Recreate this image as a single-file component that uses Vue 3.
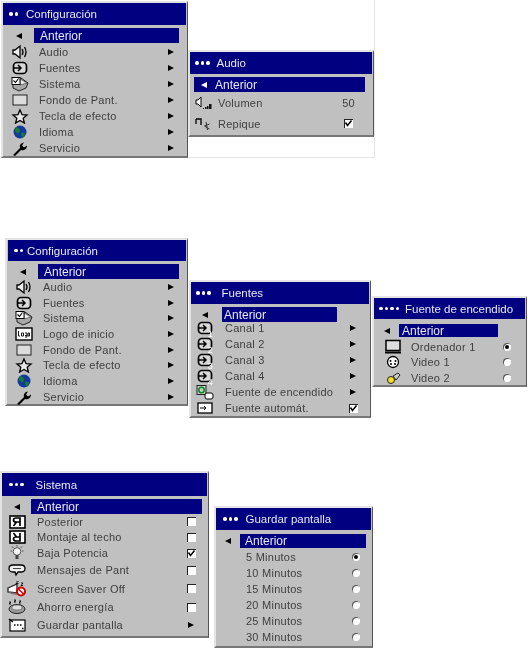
<script setup>
const sourceIcon = '<rect x="3.500" y="2.500" width="13" height="11" rx="3.500" fill="#d8d8d8" stroke="#000" stroke-width="1.700"/><path d="M3 8h8M8 5l3 3-3 3" fill="none" stroke="#000" stroke-width="1.500"/>'
const icons = {
  speaker: '<path d="M3 6h2l5-4v12l-5-4H3z" fill="#eee" stroke="#000" stroke-width="1.300"/><path d="M12 5q2 3 0 6M14.500 3q3 5 0 10" fill="none" stroke="#000" stroke-width="1.300"/>',
  source: sourceIcon,
  system: '<path d="M3 5l8-3 7 5-2 5-7 3-6-3z" fill="#a8a8a8" stroke="#222"/><path d="M10 3l7 4-7 2z" fill="#eee" stroke="#333" stroke-width=".6"/><rect x="2" y="1.500" width="8" height="7" fill="#fff" stroke="#000"/><path d="M3.500 4.500l2 2 3-4" fill="none" stroke="#000" stroke-width="1.100"/>',
  logo: '<rect x="2" y="2" width="16" height="12" fill="#fff" stroke="#000" stroke-width="1.400"/><path d="M4.500 5v5h1.500M7.500 7h2v3h-2zM11 7h2v4h-2M11 9.500h2M14 7h1.500v3H14z" fill="none" stroke="#000" stroke-width=".9"/>',
  wall: '<rect x="3" y="3" width="14" height="10" fill="#dcdcdc" stroke="#222"/>',
  star: '<path d="M10 2l2 4.600 5 .4-3.800 3.200 1.200 4.800-4.400-2.600L5.600 15l1.200-4.800L3 7l5-.4z" fill="#e8e8e8" stroke="#000" stroke-width="1.300"/>',
  globe: '<circle cx="10" cy="8" r="6.500" fill="#123a9c"/><path d="M6 3q4 1 4 4-1 3-3 2T5 6zM11 9q4-1 4 1l-2 4q-2-1-2-5z" fill="#1b7a30"/>',
  wrench: '<path d="M3 15l7-7q-1-3 2-5l2-.5-2 3 2 2 3-2q0 3-3 4.500-2 .5-3 0l-6 6z" fill="#000"/>',
  power: '<rect x="2" y="1.500" width="9" height="9" fill="#ccc" stroke="#222"/><circle cx="6.500" cy="6" r="2.700" fill="none" stroke="#0a8a20" stroke-width="1.600"/><rect x="10" y="9" width="8" height="6" rx="2" fill="#fff" stroke="#000"/>',
  auto: '<rect x="3" y="3" width="14" height="10" fill="#fff" stroke="#000" stroke-width="1.300"/><path d="M5 8h6M9 6l2 2-2 2" fill="none" stroke="#000"/>',
  monitor: '<rect x="3" y="1.500" width="14" height="10" fill="#ddd" stroke="#000" stroke-width="1.500"/><rect x="2" y="12.500" width="16" height="2" fill="#000"/>',
  svideo: '<circle cx="10" cy="8" r="5.500" fill="#fff" stroke="#000" stroke-width="1.300"/><circle cx="7.500" cy="7" r="1"/><circle cx="12.500" cy="7" r="1"/><circle cx="8" cy="10" r="1"/><circle cx="12" cy="10" r="1"/>',
  video: '<circle cx="8" cy="10" r="3.500" fill="#f0e020" stroke="#222"/><path d="M10 6l5-3 2 2-4 5z" fill="#ccc" stroke="#222"/>',
  rear: '<rect x="3" y="2" width="15" height="12" fill="#fff" stroke="#000" stroke-width="1.600"/><path d="M13 12V4H9q-2.500 0-2.500 2T9 8h4M9.500 8L6.500 12" fill="none" stroke="#000" stroke-width="1.700"/>',
  ceiling: '<rect x="3" y="2" width="15" height="12" fill="#fff" stroke="#000" stroke-width="1.600"/><path d="M13 4v8H9q-2.500 0-2.500-2T9 8h4M9.500 8L6.500 4" fill="none" stroke="#000" stroke-width="1.700"/>',
  bulb: '<circle cx="10" cy="6.500" r="3.800" fill="#f4f4f4" stroke="#555"/><rect x="8.500" y="10" width="3" height="4" fill="#444"/><path d="M10 0v1.500M3.500 6H5M15 6h1.500M5 1.500l1.500 1.500M15 1.500L13.500 3" stroke="#555"/>',
  message: '<path d="M6 3h8q4 0 4 3.500T14 10h-3l-2 3-1-3H6q-4 0-4-3.500T6 3z" fill="#eee" stroke="#000" stroke-width="1.300"/><path d="M6 6.500h8" stroke="#444"/>',
  saverOff: '<path d="M1 7l9-4v9l-9-1z" fill="#fff" stroke="#222" stroke-width="1.300"/><path d="M2 11l8 1 1 2-7-1z" fill="#777"/><circle cx="14" cy="10.500" r="4" fill="#fff" stroke="#d00000" stroke-width="2"/><path d="M11.500 8l5 5" stroke="#d00000" stroke-width="1.600"/><path d="M9 0h2.500L9 2.500h2.500M14 2h2l-2 2.500h2" fill="none" stroke="#000" stroke-width=".8"/>',
  eco: '<ellipse cx="10" cy="10" rx="8" ry="4.500" fill="#999" stroke="#222"/><ellipse cx="10" cy="8.500" rx="5" ry="2.500" fill="#ddd" stroke="#555" stroke-width=".6"/><path d="M2 3h2L2 5h2M7 1h2L7 3h2M12 2h2l-2 2h2" fill="none" stroke="#000" stroke-width=".9"/>',
  saver: '<rect x="3" y="3" width="15" height="11" fill="#fff" stroke="#000" stroke-width="1.200"/><path d="M2 2l4 3M7 8h1.500M10 8h1.500M13 8h1.500M15 11.500h1.500" stroke="#000" stroke-width="1.500"/>',
  volume: '<path d="M2 5h2l3-3v10l-3-3H2z" fill="#fff" stroke="#000"/><path d="M9 13h1v1H9zM11 12h1.500v2H11zM13 11h1.500v3H13zM15 9h2.500v5H15z" fill="#111"/>',
  music: '<path d="M2 3h5v6M2 3v5" fill="none" stroke="#000" stroke-width="1.300"/><path d="M12 6l1.500 8M15.500 8l-5 2 5 3" fill="none" stroke="#333"/>',
}

const ARROW = { trail: 'arrow' }
const windows = [
  { id: 'config1', dots: 2, title: 'Configuración', rows: [
    { icon: 'speaker', label: 'Audio', ...ARROW }, { icon: 'source', label: 'Fuentes', ...ARROW },
    { icon: 'system', label: 'Sistema', ...ARROW }, { icon: 'wall', label: 'Fondo de Pant.', ...ARROW },
    { icon: 'star', label: 'Tecla de efecto', ...ARROW }, { icon: 'globe', label: 'Idioma', ...ARROW },
    { icon: 'wrench', label: 'Servicio', ...ARROW } ] },
  { id: 'audio', dots: 3, title: 'Audio', arrowInside: true, rows: [
    { icon: 'volume', label: 'Volumen', value: '50' },
    { icon: 'music', label: 'Repique', trail: 'checked' } ] },
  { id: 'config2', dots: 2, title: 'Configuración', rows: [
    { icon: 'speaker', label: 'Audio', ...ARROW }, { icon: 'source', label: 'Fuentes', ...ARROW },
    { icon: 'system', label: 'Sistema', ...ARROW }, { icon: 'logo', label: 'Logo de inicio', ...ARROW },
    { icon: 'wall', label: 'Fondo de Pant.', ...ARROW }, { icon: 'star', label: 'Tecla de efecto', ...ARROW },
    { icon: 'globe', label: 'Idioma', ...ARROW }, { icon: 'wrench', label: 'Servicio', ...ARROW } ] },
  { id: 'fuentes', dots: 3, title: 'Fuentes', rows: [
    { icon: 'source', badge: '1', label: 'Canal 1', ...ARROW }, { icon: 'source', badge: '2', label: 'Canal 2', ...ARROW },
    { icon: 'source', badge: '3', label: 'Canal 3', ...ARROW }, { icon: 'source', badge: '4', label: 'Canal 4', ...ARROW },
    { icon: 'power', label: 'Fuente de encendido', ...ARROW }, { icon: 'auto', label: 'Fuente automát.', trail: 'checked' } ] },
  { id: 'encendido', dots: 4, title: 'Fuente de encendido', rows: [
    { icon: 'monitor', label: 'Ordenador 1', trail: 'radioOn' }, { icon: 'svideo', label: 'Video 1', trail: 'radio' },
    { icon: 'video', label: 'Video 2', trail: 'radio' } ] },
  { id: 'sistema', dots: 3, title: 'Sistema', rows: [
    { icon: 'rear', label: 'Posterior', trail: 'check' }, { icon: 'ceiling', label: 'Montaje al techo', trail: 'check' },
    { icon: 'bulb', label: 'Baja Potencia', trail: 'checked' }, { icon: 'message', label: 'Mensajes de Pant', trail: 'check' },
    { icon: 'saverOff', label: 'Screen Saver Off', trail: 'check' }, { icon: 'eco', label: 'Ahorro energía', trail: 'check' },
    { icon: 'saver', label: 'Guardar pantalla', ...ARROW } ] },
  { id: 'guardar', dots: 3, title: 'Guardar pantalla', rows: [
    { label: '5 Minutos', trail: 'radioOn' }, { label: '10 Minutos', trail: 'radio' }, { label: '15 Minutos', trail: 'radio' },
    { label: '20 Minutos', trail: 'radio' }, { label: '25 Minutos', trail: 'radio' }, { label: '30 Minutos', trail: 'radio' } ] },
]
</script>

<template>
  <div class="page">
    <div class="sheet"></div>
    <section v-for="w in windows" :key="w.id" class="win" :class="w.id">
      <header class="title">
        <span class="dots"><i v-for="n in w.dots" :key="n"></i></span>
        <span class="title-text">{{ w.title }}</span>
      </header>
      <div class="back">
        <span v-if="!w.arrowInside" class="back-slot"><b class="tri-left"></b></span>
        <span class="bar"><b v-if="w.arrowInside" class="tri-left white"></b>Anterior</span>
      </div>
      <ul class="rows">
        <li v-for="r in w.rows" :key="r.label" class="row">
          <span class="icon">
            <svg v-if="r.icon" viewBox="0 0 20 16" width="20" height="16" v-html="icons[r.icon]"></svg>
            <em v-if="r.badge" class="badge">{{ r.badge }}</em>
          </span>
          <span class="label">{{ r.label }}</span>
          <span class="trail">
            <template v-if="r.value">{{ r.value }}</template>
            <b v-else-if="r.trail === 'arrow'" class="tri-right"></b>
            <span v-else-if="r.trail === 'check' || r.trail === 'checked'" class="check">
              <svg v-if="r.trail === 'checked'" viewBox="0 0 9 9" width="9" height="9"><path d="M1.500 3.500l2 3 4-5" fill="none" stroke="#000" stroke-width="1.500"/></svg>
            </span>
            <span v-else class="radio" :class="{ on: r.trail === 'radioOn' }"></span>
          </span>
        </li>
      </ul>
    </section>
  </div>
</template>

<style>
html, body { margin: 0; background: #fff; }
</style>

<style scoped>
.page {
  position: relative;
  width: 528px;
  height: 648px;
  overflow: hidden;
  background: #fff;
  font-family: "Liberation Sans", Arial, sans-serif;
  font-size: 11px;
  letter-spacing: 0.25px;
  color: #404040;
  filter: blur(0.4px);
}
.sheet {
  position: absolute;
  left: 187px;
  top: 0;
  width: 187px;
  height: 157px;
  border-right: 1px solid #e6e6e6;
  border-bottom: 1px solid #e6e6e6;
}
.win {
  position: absolute;
  box-sizing: border-box;
  background: #c0c0c0;
  border-right: 1px solid #555;
  border-bottom: 2px solid #777;
  border-top: 2px solid #e4e4e4;
  border-left: 2px solid #e4e4e4;
}
.title {
  display: flex;
  align-items: center;
  background: #000080;
  color: #e8e8f4;
  margin-right: 1px;
  white-space: nowrap;
  font-size: 11.500px;
  letter-spacing: 0;
}
.dots { display: flex; gap: 2px; }
.dots i { width: 3.500px; height: 3.500px; border-radius: 50%; background: #fff; }
.back { display: flex; align-items: stretch; }
.back-slot { display: flex; align-items: center; justify-content: center; }
.bar {
  flex: 1;
  display: flex;
  align-items: center;
  background: #000080;
  color: #e8e8f4;
  font-size: 12px;
  letter-spacing: 0;
}
.tri-left { width: 0; height: 0; border: 3.500px solid transparent; border-left: 0; border-right: 6px solid #000; }
.tri-left.white { border-right-color: #fff; margin-right: 8px; }
.tri-right { display: block; width: 0; height: 0; border: 3.500px solid transparent; border-right: 0; border-left: 6px solid #000; }
.rows { list-style: none; margin: 0; padding: 0; display: grid; }
.row { display: flex; align-items: center; min-height: 0; white-space: nowrap; }
.icon { position: relative; display: flex; justify-content: center; flex: none; }
.badge { position: absolute; right: 6px; bottom: -3px; font: 9px "Liberation Sans", sans-serif; color: #fff; }
.label { flex: 1; }
.trail { flex: none; display: flex; justify-content: center; align-items: center; box-sizing: border-box; width: 30px; }
.check { width: 9px; height: 9px; background: #fff; box-shadow: inset 1px 1px 0 #222; display: block; line-height: 0; }
.radio { width: 8px; height: 8px; border-radius: 50%; background: #fff; box-shadow: inset 1px 1px 0 #555; position: relative; display: block; }
.radio.on::after { content: ""; position: absolute; left: 2px; top: 2px; width: 4px; height: 4px; border-radius: 50%; background: #000; }

/* window placement on the free canvas, with each window's own metrics */
.config1 { left: 1px; top: 1px; width: 187px; height: 157px; }
.config1 .title { height: 22px; padding-left: 6px; margin-bottom: 3px; }
.config1 .title-text { margin-left: 8px; }
.config1 .back-slot { width: 31px; }
.config1 .bar { height: 15px; padding-left: 6px; margin-right: 8px; }
.config1 .rows { grid-auto-rows: 16px; margin-top: 1px; }
.config1 .icon { width: 34px; }
.config1 .label { padding-left: 2px; }
.config1 .trail { padding-right: 3px; }

.audio { left: 188px; top: 50px; width: 186px; height: 87px; }
.audio .title { height: 22px; padding-left: 5px; margin-bottom: 3px; }
.audio .title-text { margin-left: 7px; }
.audio .back { margin-left: 4px; }
.audio .bar { height: 15px; padding-left: 7px; margin-right: 8px; }
.audio .rows { grid-template-rows: 21px 21px; }
.audio .icon { width: 28px; }
.audio .trail { width: 48px; padding-right: 1px; }

.config2 { left: 5px; top: 238px; width: 183px; height: 168px; }
.config2 .title { height: 21px; padding-left: 6px; margin-left: 1px; margin-bottom: 3px; }
.config2 .title-text { margin-left: 4px; }
.config2 .back-slot { width: 31px; }
.config2 .bar { height: 15px; padding-left: 6px; margin-right: 8px; }
.config2 .rows { grid-auto-rows: 15.700px; }
.config2 .icon { width: 34px; }
.config2 .label { padding-left: 2px; }
.config2 .trail { padding-right: 3px; }

.fuentes { left: 189px; top: 280px; width: 182px; height: 138px; }
.fuentes .title { height: 22px; padding-left: 5px; margin-bottom: 3px; }
.fuentes .title-text { margin-left: 11px; }
.fuentes .back-slot { width: 31px; padding-right: 4px; box-sizing: border-box; }
.fuentes .bar { height: 15px; padding-left: 2px; margin-right: 33px; }
.fuentes .rows { grid-auto-rows: 16px; margin-top: -3px; padding-top: 1px; }
.fuentes .icon { width: 28px; margin-right: 4px; }
.fuentes .label { padding-left: 2px; }
.fuentes .trail { padding-right: 4px; }

.encendido { left: 372px; top: 296px; width: 155px; height: 91px; }
.encendido .title { height: 21px; padding-left: 5px; margin-bottom: 5px; }
.encendido .title-text { margin-left: 6px; }
.encendido .back-slot { width: 25px; }
.encendido .bar { height: 13px; padding-left: 3px; margin-right: 28px; }
.encendido .rows { grid-auto-rows: 15.500px; margin-top: 2px; }
.encendido .icon { width: 37px; }
.encendido .trail { padding-right: 8px; }

.sistema { left: 0; top: 471px; width: 209px; height: 167px; }
.sistema .title { height: 23px; padding-left: 7px; margin-bottom: 3px; }
.sistema .title-text { margin-left: 12px; }
.sistema .back-slot { width: 29px; }
.sistema .bar { height: 15px; padding-left: 6px; margin-right: 6px; }
.sistema .rows { grid-template-rows: 15px 16px 16px 18px 19px 18px 17px; margin-top: 0; }
.sistema .icon { width: 29px; margin-right: 6px; }
.sistema .trail { padding-right: 4px; }

.guardar { left: 214px; top: 506px; width: 159px; height: 142px; }
.guardar .title { height: 22px; padding-left: 7px; margin-bottom: 4px; }
.guardar .title-text { margin-left: 8px; }
.guardar .back-slot { width: 24px; }
.guardar .bar { height: 14px; padding-left: 5px; margin-right: 6px; }
.guardar .rows { grid-auto-rows: 16px; margin-top: 1px; }
.guardar .icon { width: 30px; }
.guardar .trail { padding-right: 2px; }
</style>
